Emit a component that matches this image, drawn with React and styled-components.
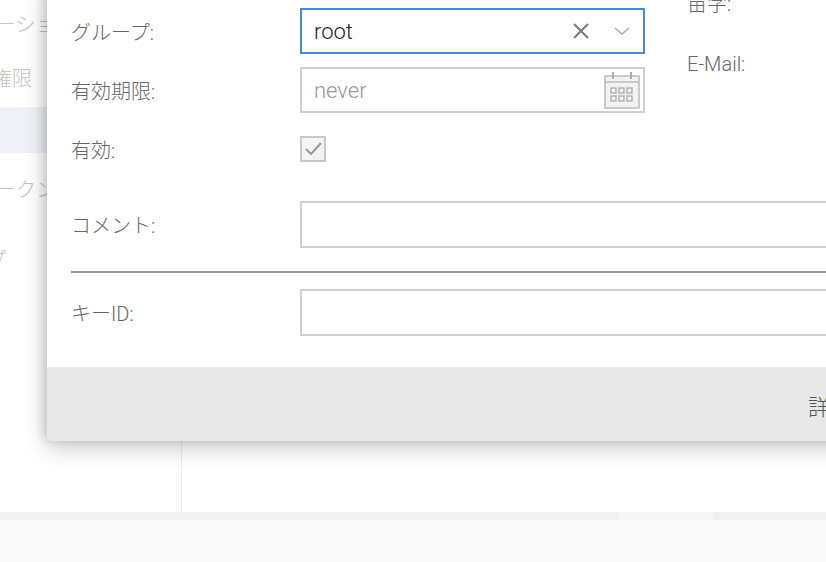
import React from "react";
import styled, { createGlobalStyle } from "styled-components";

const G = createGlobalStyle`
  html,body{margin:0;padding:0;background:#fafafa;overflow:hidden;}
  body{font-family:Roboto,"Noto Sans CJK JP",sans-serif;font-weight:300;}
`;
const Page = styled.div`position:relative;width:826px;height:562px;overflow:hidden;background:#fafafa;`;
const Back = styled.div`display:flex;height:512px;background:#fff;`;
const Side = styled.div`width:181px;border-right:1px solid #ececec;display:flex;flex-direction:column;overflow:hidden;`;
const SideItem = styled.div`
  height:${p => p.h}px;display:flex;align-items:center;white-space:nowrap;
  font-size:20px;color:#c4c4c4;background:${p => p.active ? "#eef1f6" : "transparent"};
  margin-left:${p => p.off}px;
`;
const Strip = styled.div`height:8px;background:#f0f0f0;display:flex;`;
const StripTab = styled.div`margin-left:618px;width:95px;background:#f6f6f6;`;

const Modal = styled.div`
  position:absolute;left:47px;top:-20px;width:860px;background:#fff;
  border-radius:0 0 6px 6px;box-shadow:0 6px 24px rgba(0,0,0,.22), -4px 0 10px rgba(0,0,0,.12);
  display:flex;flex-direction:column;
`;
const Body = styled.div`padding:28px 0 0 24px;display:flex;flex-direction:column;`;
const TopRows = styled.div`display:flex;`;
const LeftCol = styled.div`display:flex;flex-direction:column;width:616px;`;
const RightCol = styled.div`display:flex;flex-direction:column;gap:35px;margin-top:-20px;`;
const Row = styled.div`display:flex;align-items:center;height:${p => p.h || 46}px;margin-bottom:${p => p.mb ?? 13}px;`;
const Label = styled.div`width:229px;font-size:20px;color:#666;`;
const RLabel = styled.div`font-size:20px;color:#666;`;
const Field = styled.div`
  box-sizing:border-box;width:${p => p.w || 345}px;height:${p => p.h || 46}px;
  border:${p => p.focus ? "2px solid #4a8ad0" : "2px solid #d0d0d0"};
  display:flex;align-items:center;padding:0 12px;font-size:22px;
  color:${p => p.muted ? "#999" : "#222"};
`;
const Grow = styled.span`flex:1;`;
const Check = styled.div`
  width:22px;height:22px;border:2px solid #c8c8c8;background:#f3f3f3;display:flex;align-items:center;justify-content:center;
`;
const Rule = styled.div`height:2px;background:#999;margin:23px 0 16px 0;`;
const Footer = styled.div`
  height:73px;background:#e8e8e8;margin-top:31px;border-top:1px solid #eee;border-radius:0 0 6px 6px;
  display:flex;align-items:center;padding-left:761px;font-size:22px;color:#555;white-space:nowrap;
`;

export default function App() {
  return (
    <Page>
      <G />
      <Back>
        <Side>
          <SideItem h={47} off={-4}>ーショ</SideItem>
          <SideItem h={60} off={-8}>権限</SideItem>
          <SideItem h={46} active off={0}></SideItem>
          <SideItem h={70} off={-4}>ークン</SideItem>
          <SideItem h={70} off={-14}>プ</SideItem>
        </Side>
      </Back>
      <Strip><StripTab /></Strip>
      <Modal>
        <Body>
          <TopRows>
            <LeftCol>
              <Row>
                <Label>グループ:</Label>
                <Field focus>
                  <Grow>root</Grow>
                  <svg width="20" height="20" viewBox="0 0 20 20" style={{marginRight:22}}><path d="M3 3L17 17M17 3L3 17" stroke="#777" strokeWidth="2"/></svg>
                  <svg width="18" height="12" viewBox="0 0 18 12"><path d="M2 3L9 9L16 3" stroke="#aaa" strokeWidth="1.5" fill="none"/></svg>
                </Field>
              </Row>
              <Row>
                <Label>有効期限:</Label>
                <Field muted style={{paddingRight:2}}>
                  <Grow>never</Grow>
                  <svg width="38" height="40" viewBox="0 0 38 40">
                    <rect x="2" y="6" width="34" height="32" fill="#f2f2f2" stroke="#bbb" strokeWidth="1.5"/>
                    <line x1="2" y1="12" x2="36" y2="12" stroke="#bbb" strokeWidth="1.5"/>
                    <line x1="10" y1="2" x2="10" y2="9" stroke="#aaa" strokeWidth="2"/>
                    <line x1="28" y1="2" x2="28" y2="9" stroke="#aaa" strokeWidth="2"/>
                    {[0,1].map(r=>[0,1,2].map(c=><rect key={r+"-"+c} x={8+c*8} y={18+r*8} width="5" height="5" fill="none" stroke="#aaa" strokeWidth="1.3"/>))}
                  </svg>
                </Field>
              </Row>
              <Row h={46} mb={29}>
                <Label>有効:</Label>
                <Check>
                  <svg width="18" height="14" viewBox="0 0 18 14"><path d="M2 7L7 12L17 1" stroke="#999" strokeWidth="2" fill="none"/></svg>
                </Check>
              </Row>
            </LeftCol>
            <RightCol>
              <RLabel>苗字:</RLabel>
              <RLabel>E-Mail:</RLabel>
            </RightCol>
          </TopRows>
          <Row h={47} mb={0}>
            <Label>コメント:</Label>
            <Field w={560} h={47} />
          </Row>
          <Rule />
          <Row h={47} mb={0}>
            <Label>キーID:</Label>
            <Field w={560} h={47} />
          </Row>
        </Body>
        <Footer>詳細</Footer>
      </Modal>
    </Page>
  );
}
